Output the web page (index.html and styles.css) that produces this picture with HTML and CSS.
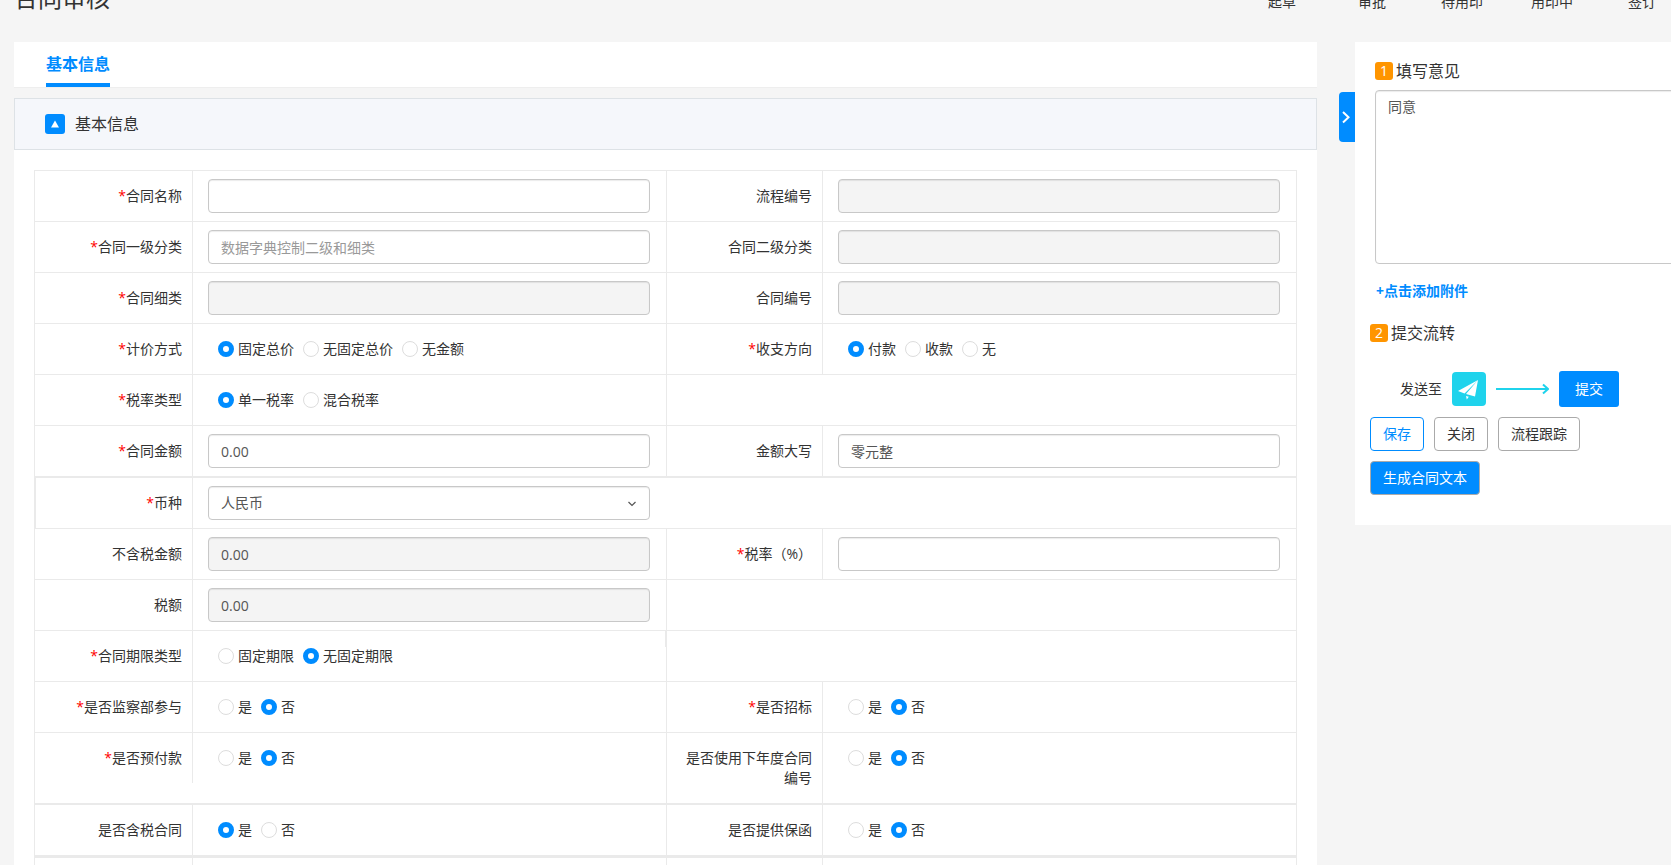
FILE: index.html
```html
<!DOCTYPE html>
<html lang="zh-CN">
<head>
<meta charset="utf-8">
<title>合同审核</title>
<link rel="stylesheet" href="styles.css">
</head>
<body>
<header class="page-head">
  <h1 class="page-title">合同审核</h1>
  <ol class="steps">
    <li>起草</li><li>审批</li><li>待用印</li><li>用印中</li><li>签订</li>
  </ol>
</header>
<div class="layout">
  <main class="main">
    <nav class="tabs"><a class="tab" href="#basic">基本信息</a></nav>
    <section class="section" id="basic">
      <h2 class="section-head">
        <button class="collapse" type="button" aria-label="收起">
          <svg width="20" height="20" viewBox="0 0 20 20"><path d="M10 6.5 L14 13.5 H6 Z" fill="#fff"/></svg>
        </button>
        基本信息
      </h2>
      <div class="section-body">
        <form class="form" id="contract">
          <div class="row">
            <label class="name" for="f-name"><b>*</b>合同名称</label>
            <div class="control"><input class="text" id="f-name" type="text"></div>
            <label class="name" for="f-flow">流程编号</label>
            <div class="control"><input class="text" id="f-flow" type="text" disabled></div>
          </div>
          <div class="row">
            <label class="name" for="f-cat1"><b>*</b>合同一级分类</label>
            <div class="control"><input class="text" id="f-cat1" type="text" placeholder="数据字典控制二级和细类"></div>
            <label class="name" for="f-cat2">合同二级分类</label>
            <div class="control"><input class="text" id="f-cat2" type="text" disabled></div>
          </div>
          <div class="row">
            <label class="name" for="f-cat3"><b>*</b>合同细类</label>
            <div class="control"><input class="text" id="f-cat3" type="text" disabled></div>
            <label class="name" for="f-no">合同编号</label>
            <div class="control"><input class="text" id="f-no" type="text" disabled></div>
          </div>
          <div class="row">
            <div class="name" id="l-price"><b>*</b>计价方式</div>
            <div class="control options" role="radiogroup" aria-labelledby="l-price">
              <label class="option"><input type="radio" name="price" checked>固定总价</label>
              <label class="option"><input type="radio" name="price">无固定总价</label>
              <label class="option"><input type="radio" name="price">无金额</label>
            </div>
            <div class="name" id="l-dir"><b>*</b>收支方向</div>
            <div class="control options" role="radiogroup" aria-labelledby="l-dir">
              <label class="option"><input type="radio" name="dir" checked>付款</label>
              <label class="option"><input type="radio" name="dir">收款</label>
              <label class="option"><input type="radio" name="dir">无</label>
            </div>
          </div>
          <div class="row">
            <div class="name" id="l-taxtype"><b>*</b>税率类型</div>
            <div class="control options" role="radiogroup" aria-labelledby="l-taxtype">
              <label class="option"><input type="radio" name="taxtype" checked>单一税率</label>
              <label class="option"><input type="radio" name="taxtype">混合税率</label>
            </div>
            <div class="blank"></div>
          </div>
          <div class="row">
            <label class="name" for="f-amount"><b>*</b>合同金额</label>
            <div class="control"><input class="text" id="f-amount" type="text" value="0.00"></div>
            <label class="name" for="f-words">金额大写</label>
            <div class="control"><input class="text" id="f-words" type="text" value="零元整"></div>
          </div>
          <div class="row row-group row-currency">
            <label class="name" for="f-cur"><b>*</b>币种</label>
            <div class="control">
              <div class="select-box">
                <select class="text" id="f-cur"><option>人民币</option></select>
                <svg class="chevron" width="8" height="6" viewBox="0 0 8 6"><path d="M0.5 1 L4 4.5 L7.5 1" fill="none" stroke="#555" stroke-width="1.2"/></svg>
              </div>
            </div>
          </div>
          <div class="row">
            <label class="name" for="f-net">不含税金额</label>
            <div class="control"><input class="text" id="f-net" type="text" value="0.00" disabled></div>
            <label class="name" for="f-rate"><b>*</b>税率（%）</label>
            <div class="control"><input class="text" id="f-rate" type="text"></div>
          </div>
          <div class="row">
            <label class="name" for="f-tax">税额</label>
            <div class="control"><input class="text" id="f-tax" type="text" value="0.00" disabled></div>
            <div class="blank"></div>
          </div>
          <div class="row">
            <div class="name" id="l-term"><b>*</b>合同期限类型</div>
            <div class="control options stub" role="radiogroup" aria-labelledby="l-term">
              <label class="option"><input type="radio" name="term">固定期限</label>
              <label class="option"><input type="radio" name="term" checked>无固定期限</label>
            </div>
            <div class="blank"></div>
          </div>
          <div class="row">
            <div class="name" id="l-sup"><b>*</b>是否监察部参与</div>
            <div class="control options" role="radiogroup" aria-labelledby="l-sup">
              <label class="option"><input type="radio" name="sup">是</label>
              <label class="option"><input type="radio" name="sup" checked>否</label>
            </div>
            <div class="name" id="l-bid"><b>*</b>是否招标</div>
            <div class="control options" role="radiogroup" aria-labelledby="l-bid">
              <label class="option"><input type="radio" name="bid">是</label>
              <label class="option"><input type="radio" name="bid" checked>否</label>
            </div>
          </div>
          <div class="row">
            <div class="name" id="l-pre"><b>*</b>是否预付款</div>
            <div class="control options short" role="radiogroup" aria-labelledby="l-pre">
              <label class="option"><input type="radio" name="pre">是</label>
              <label class="option"><input type="radio" name="pre" checked>否</label>
            </div>
            <div class="name" id="l-next">是否使用下年度合同编号</div>
            <div class="control options" role="radiogroup" aria-labelledby="l-next">
              <label class="option"><input type="radio" name="next">是</label>
              <label class="option"><input type="radio" name="next" checked>否</label>
            </div>
          </div>
          <div class="row row-group row-last">
            <div class="name" id="l-inc">是否含税合同</div>
            <div class="control options" role="radiogroup" aria-labelledby="l-inc">
              <label class="option"><input type="radio" name="inc" checked>是</label>
              <label class="option"><input type="radio" name="inc">否</label>
            </div>
            <div class="name" id="l-bond">是否提供保函</div>
            <div class="control options" role="radiogroup" aria-labelledby="l-bond">
              <label class="option"><input type="radio" name="bond">是</label>
              <label class="option"><input type="radio" name="bond" checked>否</label>
            </div>
          </div>
          <div class="row">
            <div class="name"></div><div class="control"></div>
            <div class="name"></div><div class="control"></div>
          </div>
        </form>
      </div>
    </section>
  </main>
  <button class="handle" type="button" aria-label="收起面板">
    <svg width="16" height="50" viewBox="0 0 16 50"><path d="M4 20 L9.5 25.2 L4 30.4" fill="none" stroke="#fff" stroke-width="2"/></svg>
  </button>
  <aside class="side">
    <div class="opinion">
      <label class="side-title" for="opinion"><span class="badge">1</span>填写意见</label>
      <textarea class="opinion-text" id="opinion">同意</textarea>
      <a class="attach" href="#attach">+点击添加附件</a>
    </div>
    <h3 class="side-title"><span class="badge">2</span>提交流转</h3>
    <div class="send">
      <span>发送至</span>
      <svg width="34" height="34" viewBox="0 0 34 34"><rect width="34" height="34" rx="4" fill="#1fd3ec"/><path d="M26 8 L6 19 L12.500 21.500 Z M26 8 L14 22 L23 24.500 Z M14 24 L16.800 24.800 L14.800 27.500 Z" fill="#fff"/></svg>
      <svg width="53" height="12" viewBox="0 0 53 12"><path d="M0 6 H52 M47 1.5 L52 6 L47 10.500" fill="none" stroke="#1fd3ec" stroke-width="2"/></svg>
      <button class="submit" type="button">提交</button>
    </div>
    <div class="actions">
      <button class="btn btn-save" type="button">保存</button>
      <button class="btn" type="button">关闭</button>
      <button class="btn" type="button">流程跟踪</button>
    </div>
    <div class="actions">
      <button class="btn btn-fill" type="button">生成合同文本</button>
    </div>
  </aside>
</div>
</body>
</html>
```
FILE: styles.css
```css
* { box-sizing: border-box; }

html { height: 100%; overflow: hidden; }

body {
  height: 100%;
  margin: 0;
  overflow: hidden;
  background: #f5f5f5;
  color: #333;
  font: 14px/20px "Open Sans", "Noto Sans CJK SC", sans-serif;
}

button, input, select, textarea { margin: 0; font: inherit; color: inherit; }

/* The header is scrolled partly out of the window. */
.page-head {
  display: flex;
  justify-content: space-between;
  height: 58px;
  margin-top: -16px;
  padding-left: 14px;
}

.page-title { margin: 0; font-size: 24px; line-height: 28px; font-weight: 400; }

.steps {
  display: flex;
  margin: 8px -16px 0 0;
  padding: 0;
  list-style: none;
}
.steps li { width: 90px; text-align: center; }

.layout { display: flex; align-items: flex-start; padding-left: 14px; }

.main { flex: 1; min-width: 0; }

.tabs {
  display: flex;
  padding-left: 32px;
  background: #fff;
  border-bottom: 1px solid #eee;
}
.tab {
  height: 45px;
  padding-top: 10px;
  border-bottom: 4px solid #008cff;
  color: #008cff;
  font-size: 16px;
  line-height: 24px;
  font-weight: 700;
  text-decoration: none;
}

.section { margin-top: 10px; }
.section-head {
  display: flex;
  align-items: center;
  gap: 10px;
  height: 52px;
  margin: 0;
  padding-left: 30px;
  background: #f5f7fb;
  border: 1px solid #dde2e6;
  font-size: 16px;
  font-weight: 400;
}
.collapse {
  display: flex;
  padding: 0;
  border: 0;
  border-radius: 3px;
  background: #008cff;
}
.section-body { padding: 20px; background: #fff; }

.form { border: 1px solid #eaeaea; }
.row {
  display: grid;
  grid-template-columns: 157fr 474fr 156fr 474fr;
  min-height: 51px;
  border-bottom: 1px solid #eaeaea;
}
.row-group { border-top: 1px solid #eaeaea; min-height: 52px; }
.row-currency { border-left: 1px solid #eaeaea; grid-template-columns: 156fr 474fr 156fr 474fr; }
.row-last { border-bottom-width: 3px; min-height: 54px; }

.name { padding: 15px 10px 15px 16px; text-align: right; }
.name b { color: #f00; font-weight: 400; }
.name ~ .name, .blank, .control { border-left: 1px solid #eaeaea; }
.blank { grid-column: span 2; }

.control { padding: 8px 16px 8px 15px; }
.options { display: flex; align-items: flex-start; gap: 9px; padding: 15px 16px 15px 25px; }
.short { align-self: start; }
.stub { background: linear-gradient(#eaeaea, #eaeaea) no-repeat right top / 1px 16px; }

.option { display: flex; align-items: center; gap: 4px; }
.option input {
  appearance: none;
  width: 16px;
  height: 16px;
  border: 1px solid #ddd;
  border-radius: 50%;
  background: #fff;
}
.option input:checked { border: 5px solid #008cff; }

.text {
  display: block;
  width: 100%;
  height: 34px;
  padding: 0 12px;
  border: 1px solid #c8c8c8;
  border-radius: 4px;
  background: #fff;
  box-shadow: inset 0 1px 1px rgba(0, 0, 0, 0.08);
  color: #555;
}
.text:disabled { background: #f4f4f4; opacity: 1; }
.text::placeholder { color: #999; opacity: 1; }
.select-box { position: relative; }
.select-box select { appearance: none; }
.chevron { position: absolute; right: 14px; top: 15px; pointer-events: none; }

.handle {
  display: flex;
  margin: 50px 0 0 22px;
  padding: 0;
  border: 0;
  border-radius: 4px 0 0 4px;
  background: #008cff;
}

.side {
  flex: 0 0 316px;
  overflow: hidden;
  padding: 17px 0 30px 15px;
  background: #fff;
}
.side-title {
  display: flex;
  align-items: center;
  gap: 3px;
  margin: 0;
  font-size: 16px;
  line-height: 24px;
  font-weight: 400;
}
.badge {
  width: 18px;
  height: 18px;
  border-radius: 3px;
  background: #ff9500;
  color: #fff;
  font-size: 14px;
  line-height: 18px;
  text-align: center;
}
.opinion { padding-left: 5px; }
/* The box runs on past the edge of the panel. */
.opinion-text {
  display: block;
  width: calc(100% + 20px);
  height: 174px;
  margin-top: 7px;
  padding: 6px 12px;
  border: 1px solid #c8c8c8;
  border-radius: 4px;
  box-shadow: inset 0 1px 1px rgba(0, 0, 0, 0.08);
  color: #555;
  resize: none;
}
.attach {
  display: block;
  margin: 17px 0 20px 1px;
  color: #008cff;
  font-weight: 700;
  text-decoration: none;
}

.send { display: flex; align-items: center; gap: 10px; margin: 26px 0 0 30px; }
.submit {
  width: 60px;
  height: 36px;
  padding: 0;
  border: 0;
  border-radius: 3px;
  background: #008cff;
  color: #fff;
}

.actions { display: flex; gap: 10px; margin-top: 10px; }
.btn {
  height: 34px;
  padding: 0 12px;
  border: 1px solid #aaa;
  border-radius: 4px;
  background: #fff;
}
.btn-save { border-color: #008cff; color: #008cff; }
.btn-fill { background: #008cff; color: #fff; }
```
